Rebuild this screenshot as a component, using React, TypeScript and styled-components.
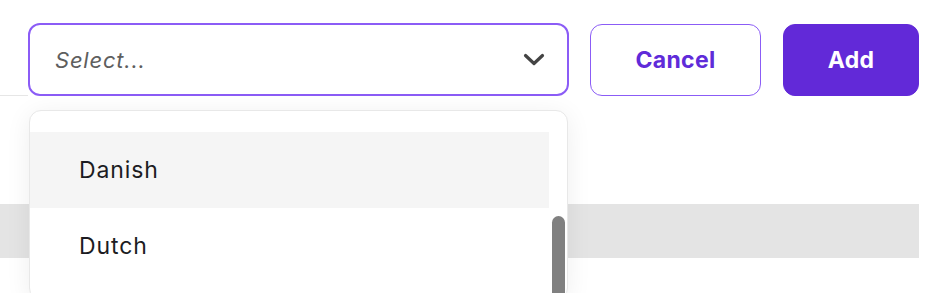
import React from 'react'
import styled, { createGlobalStyle } from 'styled-components'

const GlobalStyle = createGlobalStyle`
  * { box-sizing: border-box; }
  body {
    margin: 0;
    background: #ffffff;
    font-family: Inter, "Noto Sans", sans-serif;
    overflow: hidden;
  }
`

const Page = styled.div`
  width: 938px;
  height: 293px;
  padding-right: 19px;
  overflow: hidden;
`

const Toolbar = styled.div`
  display: flex;
  padding-top: 23px;
  height: 96px;
`

const Lead = styled.div`
  width: 28px;
  border-bottom: 1px solid #e6e6e6;
`

const SelectWrap = styled.div`
  position: relative;
  width: 541px;
  margin-right: 21px;
  z-index: 2;
`

const SelectControl = styled.div`
  height: 73px;
  border: 2px solid #8b5cf6;
  border-radius: 12px;
  display: flex;
  align-items: center;
  justify-content: space-between;
  padding: 0 22px 0 25px;
  background: #fff;
`

const Placeholder = styled.span`
  font-style: italic;
  font-size: 22px;
  color: #5e5e5e;
  letter-spacing: 0.8px;
`

const Menu = styled.div`
  position: absolute;
  top: 87px;
  left: 1px;
  width: 539px;
  height: 190px;
  background: #fff;
  border: 1px solid #e8e8e8;
  border-radius: 12px;
  box-shadow: 0 4px 26px rgba(0, 0, 0, 0.07);
  padding: 21px 18px 0 0;
  overflow: hidden;
`

const Option = styled.div<{ $active?: boolean }>`
  height: 76px;
  display: flex;
  align-items: center;
  padding-left: 49px;
  font-size: 23px;
  letter-spacing: 0.9px;
  color: #1c1c22;
  background: ${(p) => (p.$active ? '#f5f5f5' : 'transparent')};
`

const Thumb = styled.div`
  position: absolute;
  right: 2px;
  top: 105px;
  width: 13px;
  height: 200px;
  border-radius: 7px;
  background: #808080;
`

const Button = styled.button<{ $primary?: boolean }>`
  align-self: flex-end;
  height: 72px;
  width: ${(p) => (p.$primary ? '136px' : '171px')};
  margin-right: ${(p) => (p.$primary ? '0' : '22px')};
  border-radius: 12px;
  border: 1px solid ${(p) => (p.$primary ? '#6229d8' : '#8b5cf6')};
  background: ${(p) => (p.$primary ? '#6229d8' : '#ffffff')};
  color: ${(p) => (p.$primary ? '#ffffff' : '#5f2bd9')};
  font-family: Inter, "Noto Sans", sans-serif;
  font-weight: 700;
  font-size: 23px;
  letter-spacing: 0.3px;
  cursor: pointer;
`

const Content = styled.div`
  padding-top: 108px;
`

const Band = styled.div`
  height: 54px;
  background: #e4e4e4;
`

const Chevron = () => (
  <svg width="22" height="14" viewBox="0 0 22 14" fill="none">
    <path d="M2.5 2.5 L11 10.5 L19.5 2.5" stroke="#444" strokeWidth="3.2" strokeLinecap="round" strokeLinejoin="round" />
  </svg>
)

export default function App() {
  return (
    <Page>
      <GlobalStyle />
      <Toolbar>
        <Lead />
        <SelectWrap>
          <SelectControl>
            <Placeholder>Select...</Placeholder>
            <Chevron />
          </SelectControl>
          <Menu>
            <Option $active>Danish</Option>
            <Option>Dutch</Option>
            <Thumb />
          </Menu>
        </SelectWrap>
        <Button type="button">Cancel</Button>
        <Button type="button" $primary>Add</Button>
      </Toolbar>
      <Content>
        <Band />
      </Content>
    </Page>
  )
}
